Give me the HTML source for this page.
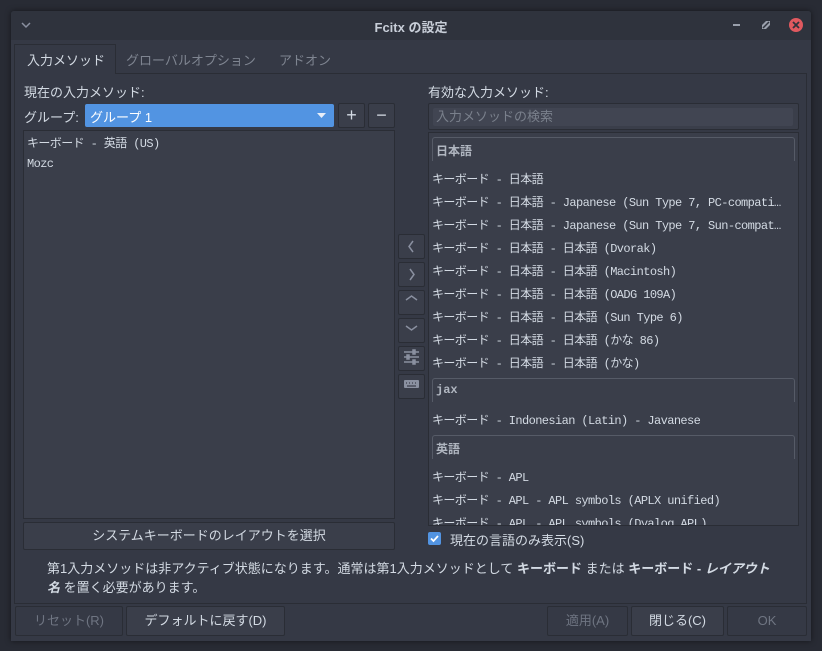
<!DOCTYPE html>
<html><head><meta charset="utf-8"><style>
*{margin:0;padding:0;box-sizing:border-box}
body{width:822px;height:651px;background:#282b34;position:relative;overflow:hidden;font-family:"Liberation Sans","Noto Sans CJK JP",sans-serif;font-size:13px;color:#d3dae3}
.a{position:absolute}
.win{left:11px;top:11px;width:800px;height:630px;background:#353945;border-radius:3px 3px 0 0;box-shadow:0 0 6px rgba(0,0,0,.5)}
.title{left:11px;top:11px;width:800px;height:29px;background:#2f333d;border-radius:3px 3px 0 0}
.mono{font-family:"Liberation Mono","Noto Sans CJK JP",monospace;font-size:12px;letter-spacing:-0.6px}
.btn{background:#3a3e4a;border:1px solid #2a2d35;border-radius:2px;text-align:center;color:#d3dae3}
.list{background:#3a3e4a;border:1px solid #2a2d35}
.hdr{border:1px solid #565b67;border-bottom:none;border-radius:3px 3px 0 0;font-weight:bold;color:#b0b6c0;padding:4px 0 0 3px;font-family:"Liberation Mono","Noto Sans CJK JP",monospace;font-size:12px}
.it{left:432px;white-space:nowrap}
</style></head><body>
<div class="a win"></div>
<div class="a title"></div>
<svg class="a" style="left:20px;top:20px" width="12" height="10"><path d="M2 3l4 4 4-4" stroke="#8a90a0" stroke-width="1.5" fill="none"/></svg>
<div class="a" style="left:0;width:822px;top:17px;text-align:center;font-weight:bold;font-size:13px;color:#c8ced8">Fcitx の設定</div>
<div class="a" style="left:733px;top:24px;width:7px;height:2px;background:#9aa0ac"></div>
<svg class="a" style="left:762px;top:21px" width="8" height="8"><path d="M0 4l4-4h4v4l-4 4H0z" fill="#9aa0ac"/><path d="M1 7l6-6" stroke="#2f333d" stroke-width="1.5"/></svg>
<div class="a" style="left:789px;top:18px;width:14px;height:14px;border-radius:50%;background:#e0595f"></div>
<svg class="a" style="left:792px;top:21px" width="8" height="8"><path d="M1 1l6 6M7 1L1 7" stroke="#2f333d" stroke-width="1.8"/></svg>
<div class="a" style="left:14px;top:73px;width:793px;height:531px;border:1px solid #2a2d35;background:#353945"></div>
<div class="a" style="left:14px;top:44px;width:102px;height:30px;background:#353945;border:1px solid #2a2d35;border-bottom:none"></div>
<div class="a" style="left:27px;top:50px">入力メソッド</div>
<div class="a" style="left:126px;top:50px;color:#7f8591">グローバルオプション</div>
<div class="a" style="left:279px;top:50px;color:#7f8591">アドオン</div>
<div class="a" style="left:24px;top:82px">現在の入力メソッド:</div>
<div class="a" style="left:24px;top:107px">グループ:</div>
<div class="a" style="left:85px;top:104px;width:249px;height:23px;background:#5294e2;border-radius:2px;padding:3px 0 0 5px;color:#fff">グループ 1</div>
<svg class="a" style="left:317px;top:113px" width="9" height="5"><path d="M0 0h9L4.5 5z" fill="#e8eef8"/></svg>
<div class="a btn" style="left:338px;top:103px;width:27px;height:25px;font-size:18px;line-height:22px">+</div>
<div class="a btn" style="left:368px;top:103px;width:27px;height:25px;font-size:18px;line-height:22px">−</div>
<div class="a list" style="left:23px;top:130px;width:372px;height:389px"></div>
<div class="a mono" style="left:27px;top:134px">キーボード - 英語 (US)</div>
<div class="a mono" style="left:27px;top:157px">Mozc</div>
<div class="a btn" style="left:23px;top:522px;width:372px;height:28px;line-height:26px">システムキーボードのレイアウトを選択</div>
<div class="a btn" style="left:398px;top:234px;width:27px;height:25px"></div>
<div class="a btn" style="left:398px;top:262px;width:27px;height:25px"></div>
<div class="a btn" style="left:398px;top:290px;width:27px;height:25px"></div>
<div class="a btn" style="left:398px;top:318px;width:27px;height:25px"></div>
<div class="a btn" style="left:398px;top:346px;width:27px;height:25px"></div>
<div class="a btn" style="left:398px;top:374px;width:27px;height:25px"></div>
<svg class="a" style="left:398px;top:234px" width="27" height="170" fill="none" stroke="#8a90a0" stroke-width="1.5">
<path d="M15 7l-4 5.5 4 5.5"/><path d="M12 35l4 5.5-4 5.5"/><path d="M8 66l5.5-4 5.5 4"/><path d="M8 92l5.5 4 5.5-4"/>
<path d="M6 118h15M6 123h15M6 128h15" stroke-width="1.5"/><rect x="15" y="116" width="2" height="4" fill="#8a90a0"/><rect x="9" y="121" width="2" height="4" fill="#8a90a0"/><rect x="15" y="126" width="2" height="4" fill="#8a90a0"/>
<rect x="6" y="146" width="15" height="8" rx="1" fill="#8a90a0" stroke="none"/><path d="M8 149h1M11 149h1M14 149h1M17 149h1M9 152h9" stroke="#3a3e4a" stroke-width="1.2"/>
</svg>
<div class="a" style="left:428px;top:82px">有効な入力メソッド:</div>
<div class="a" style="left:428px;top:103px;width:371px;height:27px;background:#3a3e4a;border:1px solid #2a2d35;border-radius:2px"></div>
<div class="a" style="left:433px;top:108px;width:360px;height:18px;background:#414552;border-radius:2px;padding:0 0 0 3px;color:#7a808c;line-height:17px">入力メソッドの検索</div>
<div class="a list" style="left:428px;top:132px;width:371px;height:394px;overflow:hidden">
<div class="a hdr" style="left:3px;top:4px;width:363px;height:24px">日本語</div>
<div class="a hdr" style="left:3px;top:245px;width:363px;height:24px">jax</div>
<div class="a hdr" style="left:3px;top:302px;width:363px;height:24px">英語</div>
</div>
<div class="mono">
<div class="a it" style="top:170px">キーボード - 日本語</div>
<div class="a it" style="top:193px">キーボード - 日本語 - Japanese (Sun Type 7, PC-compati…</div>
<div class="a it" style="top:216px">キーボード - 日本語 - Japanese (Sun Type 7, Sun-compat…</div>
<div class="a it" style="top:239px">キーボード - 日本語 - 日本語 (Dvorak)</div>
<div class="a it" style="top:262px">キーボード - 日本語 - 日本語 (Macintosh)</div>
<div class="a it" style="top:285px">キーボード - 日本語 - 日本語 (OADG 109A)</div>
<div class="a it" style="top:308px">キーボード - 日本語 - 日本語 (Sun Type 6)</div>
<div class="a it" style="top:331px">キーボード - 日本語 - 日本語 (かな 86)</div>
<div class="a it" style="top:354px">キーボード - 日本語 - 日本語 (かな)</div>
<div class="a it" style="top:411px">キーボード - Indonesian (Latin) - Javanese</div>
<div class="a it" style="top:468px">キーボード - APL</div>
<div class="a it" style="top:491px">キーボード - APL - APL symbols (APLX unified)</div>
<div class="a" style="left:429px;top:513px;width:369px;height:12px;overflow:hidden"><div class="a it" style="left:3px;top:1px">キーボード - APL - APL symbols (Dyalog APL)</div></div>
</div>
<div class="a" style="left:428px;top:532px;width:13px;height:13px;background:#5294e2;border-radius:2px"></div>
<svg class="a" style="left:428px;top:532px" width="13" height="13"><path d="M3 6.5l2.5 2.5 4.5-5" stroke="#fff" stroke-width="1.8" fill="none"/></svg>
<div class="a" style="left:450px;top:530px">現在の言語のみ表示(S)</div>
<div class="a" style="left:47px;top:559px;width:760px;line-height:19px;white-space:nowrap">第1入力メソッドは非アクティブ状態になります。通常は第1入力メソッドとして <b>キーボード</b> または <b>キーボード - <i>レイアウト</i></b><br><b><i>名</i></b> を置く必要があります。</div>
<div class="a btn" style="left:15px;top:606px;width:108px;height:30px;line-height:28px;background:#353945;color:#6f7582">リセット(R)</div>
<div class="a btn" style="left:126px;top:606px;width:159px;height:30px;line-height:28px">デフォルトに戻す(D)</div>
<div class="a btn" style="left:547px;top:606px;width:81px;height:30px;line-height:28px;background:#353945;color:#6f7582">適用(A)</div>
<div class="a btn" style="left:631px;top:606px;width:93px;height:30px;line-height:28px">閉じる(C)</div>
<div class="a btn" style="left:727px;top:606px;width:80px;height:30px;line-height:28px;background:#353945;color:#6f7582">OK</div>
</body></html>
